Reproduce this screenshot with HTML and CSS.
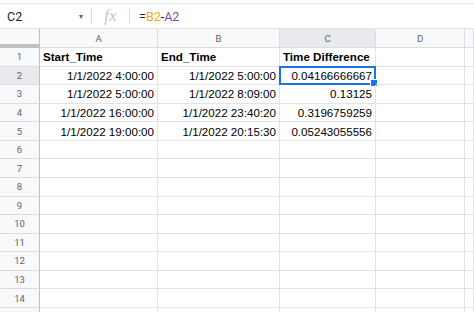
FILE: index.html
```html
<!DOCTYPE html>
<html lang="en">
<head>
  <meta charset="UTF-8" />
  <title>Time Difference - Sheet</title>
  <link rel="stylesheet" href="styles.css">
</head>
<body>

<div class="formula-bar">
  <div class="name-box">
    <span>C2</span>
    <span class="caret">&#9662;</span>
  </div>
  <div class="divider"></div>
  <div class="fx">fx</div>
  <div class="divider"></div>
  <div class="formula">=<span class="ref-b">B2</span>-<span class="ref-a">A2</span></div>
</div>

<div class="grid">
  <!-- column headers -->
  <div class="corner"></div>
  <div class="col-head">A</div>
  <div class="col-head">B</div>
  <div class="col-head active">C</div>
  <div class="col-head">D</div>
  <div class="col-head"></div>

  <!-- row 1 -->
  <div class="row-head">1</div>
  <div class="cell bold">Start_Time</div>
  <div class="cell bold">End_Time</div>
  <div class="cell bold">Time Difference</div>
  <div class="cell"></div>
  <div class="cell"></div>

  <div class="row-head active">2</div>
  <div class="cell num">1/1/2022 4:00:00</div>
  <div class="cell num">1/1/2022 5:00:00</div>
  <div class="cell num selected">0.04166666667<span class="handle"></span></div>
  <div class="cell"></div>
  <div class="cell"></div>

  <div class="row-head">3</div>
  <div class="cell num">1/1/2022 5:00:00</div>
  <div class="cell num">1/1/2022 8:09:00</div>
  <div class="cell num">0.13125</div>
  <div class="cell"></div>
  <div class="cell"></div>

  <div class="row-head">4</div>
  <div class="cell num">1/1/2022 16:00:00</div>
  <div class="cell num">1/1/2022 23:40:20</div>
  <div class="cell num">0.3196759259</div>
  <div class="cell"></div>
  <div class="cell"></div>

  <div class="row-head">5</div>
  <div class="cell num">1/1/2022 19:00:00</div>
  <div class="cell num">1/1/2022 20:15:30</div>
  <div class="cell num">0.05243055556</div>
  <div class="cell"></div>
  <div class="cell"></div>

  <div class="row-head">6</div><div class="cell"></div><div class="cell"></div><div class="cell"></div><div class="cell"></div><div class="cell"></div>
  <div class="row-head">7</div><div class="cell"></div><div class="cell"></div><div class="cell"></div><div class="cell"></div><div class="cell"></div>
  <div class="row-head">8</div><div class="cell"></div><div class="cell"></div><div class="cell"></div><div class="cell"></div><div class="cell"></div>
  <div class="row-head">9</div><div class="cell"></div><div class="cell"></div><div class="cell"></div><div class="cell"></div><div class="cell"></div>
  <div class="row-head">10</div><div class="cell"></div><div class="cell"></div><div class="cell"></div><div class="cell"></div><div class="cell"></div>
  <div class="row-head">11</div><div class="cell"></div><div class="cell"></div><div class="cell"></div><div class="cell"></div><div class="cell"></div>
  <div class="row-head">12</div><div class="cell"></div><div class="cell"></div><div class="cell"></div><div class="cell"></div><div class="cell"></div>
  <div class="row-head">13</div><div class="cell"></div><div class="cell"></div><div class="cell"></div><div class="cell"></div><div class="cell"></div>
  <div class="row-head">14</div><div class="cell"></div><div class="cell"></div><div class="cell"></div><div class="cell"></div><div class="cell"></div>
  <!-- partially visible row below the fold -->
  <div class="row-head"></div><div class="cell"></div><div class="cell"></div><div class="cell"></div><div class="cell"></div><div class="cell"></div>
</div>

</body>
</html>
```

FILE: styles.css
```css
html, body {
  margin: 0;
  padding: 0;
  background: #fff;
  overflow: hidden;
  height: 100%;
}

body {
  font-family: "Liberation Sans", Arial, sans-serif;
  color: #000;
}

/* formula bar */
.formula-bar {
  display: flex;
  align-items: center;
  height: 24px;
  margin-top: 3px;
  border-top: 1px solid #e3e3e3;
  border-bottom: 1px solid #e3e3e3;
  font-family: Roboto, "Liberation Sans", sans-serif;
  font-size: 12.5px;
  color: #202124;
}

.name-box {
  display: flex;
  align-items: center;
  justify-content: space-between;
  width: 76px;
  padding: 0 8px 0 7px;
}

.caret {
  font-size: 8px;
  color: #5f6368;
}

.divider {
  width: 1px;
  height: 16px;
  background: #dadce0;
}

.fx {
  width: 37px;
  text-align: center;
  font-family: "Liberation Serif", serif;
  font-style: italic;
  font-size: 17px;
  color: #c4c7c5;
}

.formula {
  padding-left: 9px;
}

.ref-b { color: #f4a324; }
.ref-a { color: #8e44ad; }

/* sheet grid */
.grid {
  display: grid;
  width: 100%;
  grid-template-columns: 40px 118px 122px 96px 89px 1fr;
  grid-template-rows: 19px repeat(15, 18.57px);
  font-size: 11.6px;
}

.corner {
  background: #f8f9fa;
  border-right: 4px solid #c0c0c0;
  border-bottom: 4px solid #c0c0c0;
  margin-right: -3px;
  box-sizing: border-box;
}

.col-head, .row-head {
  display: flex;
  align-items: center;
  justify-content: center;
  background: #f8f9fa;
  color: #5f6368;
  font-family: Roboto, "Liberation Sans", sans-serif;
  font-size: 9.5px;
  border-right: 1px solid #dadce0;
  border-bottom: 1px solid #dadce0;
  box-sizing: border-box;
}

.row-head {
  border-right: 1px solid #c0c0c0;
}

.col-head.active, .row-head.active {
  background: #e8eaed;
}

.cell {
  position: relative;
  display: flex;
  align-items: center;
  padding: 0 3px;
  border-right: 1px solid #e2e3e3;
  border-bottom: 1px solid #e2e3e3;
  box-sizing: border-box;
  white-space: nowrap;
}

.cell.bold {
  font-weight: bold;
}

.cell.num {
  justify-content: flex-end;
}

.cell.selected {
  border: 2px solid #1a73e8;
  margin: -1px 0 0 -1px;
  padding-right: 2px;
}

.handle {
  position: absolute;
  right: -4px;
  bottom: -4px;
  width: 6px;
  height: 6px;
  background: #1a73e8;
  border: 1px solid #fff;
}
```
